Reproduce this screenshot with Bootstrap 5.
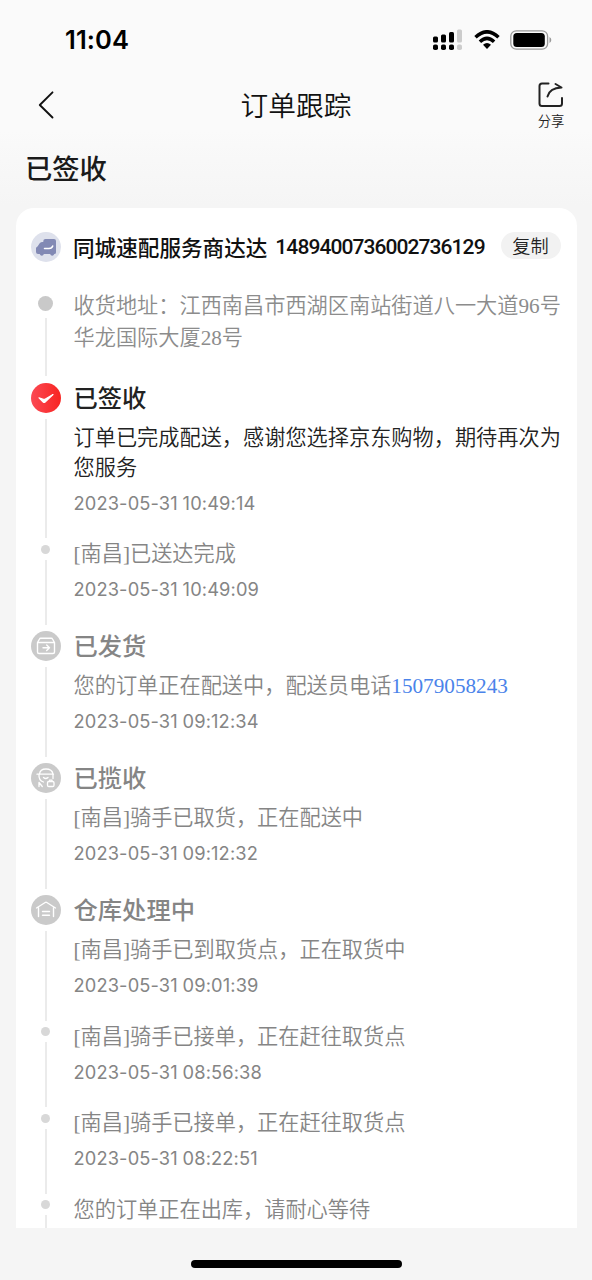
<!DOCTYPE html>
<html lang="zh-CN">
<head>
<meta charset="utf-8">
<meta name="viewport" content="width=device-width, initial-scale=1">
<title>订单跟踪</title>
<link href="https://cdn.jsdelivr.net/npm/bootstrap@5.3.0/dist/css/bootstrap.min.css" rel="stylesheet">
<style>
  body { font-family: "Noto Sans CJK SC", sans-serif; color: #1a1a1a; background: #f5f5f5; }
  .screen { height: 1280px; background: linear-gradient(#fafafa 0, #fafafa 130px, #f5f5f5 205px); }
  .status-bar { height: 80px; padding: 0 40px 0 65px; }
  .clock { font: 600 25.5px/30px Inter, sans-serif; color: #000; letter-spacing: .1px; }
  .title-bar { height: 50px; padding: 0 27px 0 37px; }
  .title-bar h1 { font-size: 27.7px; font-weight: 350; line-height: 40px; color: #111; padding-bottom: 2px; }
  .share { width: 28px; font-size: 13.3px; font-weight: 350; line-height: 16px; color: #222; }
  .state { height: 78px; padding: 17px 0 0 25px; font-size: 27.3px; line-height: 40px; font-weight: 500; }
  .sheet { width: 561px; height: 1020px; margin-left: 15.5px; padding: 0 15px; border-radius: 18px 18px 0 0; }
  .courier { height: 81px; padding-bottom: 4px; }
  .courier-name { font-size: 21.6px; font-weight: 500; line-height: 30px; color: #111; }
  .courier-no { font: 500 21px/30px Roboto, sans-serif; letter-spacing: -.92px; color: #111; padding-top: 1px; }
  .copy-btn { width: 60px; height: 27px; font-size: 18.2px; font-weight: 350; line-height: 25px; background: #f2f2f2; color: #222; margin: 0 1px 2px 0; }
  .rail { width: 30px; flex: none; }
  .rail::after { content: ""; flex: 1; width: 2px; margin: 6px 0 1px; background: #ebebeb; }
  .event { font-family: "Liberation Serif", "Noto Sans CJK SC", sans-serif; font-weight: 350; font-size: 21.2px; line-height: 30px; color: #858585; gap: 13px; }
  .event-body { padding-bottom: 24.5px; white-space: nowrap; }
  .address { line-height: 32px; color: #8c8c8c; }
  .address .event-body { padding: 1px 0 23px; }
  .address .rail { padding-top: 7px; }
  .address .dot { width: 15px; height: 15px; background: #c9c9c9; margin-bottom: 1px; }
  .dot { width: 9px; height: 9px; border-radius: 50%; background: #d8d8d8; }
  .step .rail { padding-top: 5.5px; }
  .stage { padding-top: 3.5px; }
  .stage .rail { padding-top: 2px; }
  .stage h2 { font: 500 24.3px/34px "Noto Sans CJK SC", sans-serif; margin: -1px 0 9px; }
  .stamp { font: 400 18.3px/24px Inter, sans-serif; color: #858585; margin-top: 8px; letter-spacing: .12px; word-spacing: -.5px; }
  .current { color: #222; }
  .phone { color: #4a83ea; }
  .home-area { height: 52px; padding-top: 32px; }
  .home-line { width: 211px; height: 8px; background: #000; }
  svg { display: block; flex: none; }
</style>
</head>
<body>
<main class="screen overflow-hidden">
  <div class="status-bar d-flex align-items-center justify-content-between">
    <span class="clock">11:04</span>
    <div class="d-flex align-items-center">
      <svg width="30" height="22" viewBox="0 0 30 22" aria-hidden="true">
        <g fill="#000"><rect x="1" y="7.500" width="5" height="6" rx="1.500"/><rect x="9" y="5.500" width="5" height="8" rx="1.500"/><rect x="17" y="3" width="5" height="10.500" rx="1.500"/><rect x="1" y="15.500" width="5" height="5.500" rx="1.800"/><rect x="9" y="15.500" width="5" height="5.500" rx="1.800"/><rect x="17" y="15.500" width="5" height="5.500" rx="1.800"/></g>
        <g fill="#ccc"><rect x="25" y="0.500" width="5" height="13" rx="1.500"/><rect x="25" y="15.500" width="5" height="5.500" rx="1.800"/></g>
      </svg>
      <svg width="26" height="20" viewBox="0 0 26 20" style="margin-left:12px" aria-hidden="true">
        <g fill="none" stroke="#000" stroke-width="3.500"><path d="M1.500 7.200Q13-3.600 24.500 7.200"/><path d="M5.900 11.700Q13 5 20.100 11.700"/></g>
        <path d="M9 14.800Q13 11.300 17 14.800L13 19Z"/>
      </svg>
      <svg width="42" height="20" viewBox="0 0 42 20" style="margin-left:10.500px" aria-hidden="true">
        <rect x=".8" y=".8" width="36.800" height="18.400" rx="5.500" fill="none" stroke="#999" stroke-width="1.300"/>
        <rect x="3.300" y="3" width="31.500" height="14" rx="3.500"/><path d="M39.500 7v6q1.800-1 1.800-3t-1.800-3" fill="#999"/>
      </svg>
    </div>
  </div>

  <header class="title-bar d-flex align-items-center justify-content-between">
    <svg width="18" height="30" viewBox="0 0 18 30" fill="none" stroke="#111" stroke-width="1.900" stroke-linecap="round" stroke-linejoin="round" role="img" aria-label="返回"><path d="M15.500 2.300 2.800 15l12.700 12.500"/></svg>
    <h1 class="mb-0">订单跟踪</h1>
    <div class="share d-flex flex-column align-items-center text-nowrap">
      <svg width="26" height="26" viewBox="0 0 26 26" fill="none" stroke="#222" stroke-width="2" stroke-linecap="round" stroke-linejoin="round" aria-hidden="true"><path d="M10.500 1.500H4Q1.500 1.500 1.500 4v17.500Q1.500 24 4 24h17.500q2.500 0 2.500-2.500V16"/><path d="M9.500 14.500Q11.500 6 23.500 5.500L17.500 2"/></svg>
      <span style="margin-top:5px">分享</span>
    </div>
  </header>

  <div class="state">已签收</div>

  <section class="sheet bg-white overflow-hidden">
    <div class="courier d-flex align-items-center text-nowrap">
      <svg width="30" height="30" viewBox="0 0 30 30" aria-hidden="true"><circle cx="15" cy="15" r="15" fill="#dee1ec"/><path fill="#8289b4" d="M14.500 7H23q2 0 2 2v11.500q0 1.500-1.700 1.500-.6 1.800-2.100 1.800T19.100 22h-6.200q-.6 1.800-2.100 1.800T8.700 22H7q-2 0-2-2v-3.500q0-1.700 1.500-2l2-3Q9.300 10 11 10h1.300V9q0-2 2.200-2"/><path d="M13.500 16.500h4.500q3 0 3.700-2.500" fill="none" stroke="#fff" stroke-width="1.500" stroke-linecap="round"/></svg>
      <span class="courier-name" style="margin-left:12.500px">同城速配服务商达达</span>
      <span class="courier-no" style="margin-left:8px">1489400736002736129</span>
      <button type="button" class="copy-btn btn rounded-pill border-0 p-0 ms-auto">复制</button>
    </div>

    <div class="event address d-flex">
      <div class="rail d-flex flex-column align-items-center"><span class="dot"></span></div>
      <div class="event-body">收货地址：江西南昌市西湖区南站街道八一大道96号<br>华龙国际大厦28号</div>
    </div>

    <div class="event stage current d-flex">
      <div class="rail d-flex flex-column align-items-center">
        <svg width="30" height="30" viewBox="0 0 30 30"><defs><linearGradient id="red"><stop stop-color="#fb4a54"/><stop offset="1" stop-color="#f82421"/></linearGradient></defs><circle cx="15" cy="15" r="15" fill="url(#red)"/><path d="M8 14.800l4.200 4.200q.9.800 1.900 0L22 11.500l-8 4.700q-.8.500-1.700 0Z" fill="#fff" stroke="#fff" stroke-width="1.200" stroke-linejoin="round"/></svg>
      </div>
      <div class="event-body"><h2>已签收</h2>订单已完成配送，感谢您选择京东购物，期待再次为<br>您服务<div class="stamp">2023-05-31 10:49:14</div></div>
    </div>

    <div class="event step d-flex">
      <div class="rail d-flex flex-column align-items-center"><span class="dot"></span></div>
      <div class="event-body">[南昌]已送达完成<div class="stamp">2023-05-31 10:49:09</div></div>
    </div>

    <div class="event stage d-flex">
      <div class="rail d-flex flex-column align-items-center">
        <svg width="30" height="30" viewBox="0 0 30 30"><circle cx="15" cy="15" r="15" fill="#cacaca"/><g fill="none" stroke="#fff" stroke-width="1.400" stroke-linecap="round" stroke-linejoin="round"><path d="M6.500 11.500h17V21q0 1.500-1.500 1.500H8Q6.500 22.500 6.500 21Zm0 0L8.500 8q.3-.7 1.200-.7h10.600q.9 0 1.200.7l2 3.500M12 16.800h6.500m-2.800-2.700 2.800 2.700-2.800 2.700"/></g></svg>
      </div>
      <div class="event-body"><h2>已发货</h2>您的订单正在配送中，配送员电话<span class="phone">15079058243</span><div class="stamp">2023-05-31 09:12:34</div></div>
    </div>

    <div class="event stage d-flex">
      <div class="rail d-flex flex-column align-items-center">
        <svg width="30" height="30" viewBox="0 0 30 30"><circle cx="15" cy="15" r="15" fill="#cacaca"/><g fill="none" stroke="#fff" stroke-width="1.300" stroke-linecap="round" stroke-linejoin="round"><path d="M6 11.200h16.500M8.500 11Q9 6 15 6t7 5v4.500M8 11.500q-.5 6 4.500 7.500M12.500 14.500q2.200 2 4.500 0M8 23.500V19.500l3.300 4"/><rect x="16.500" y="18.500" width="6.500" height="5" rx="1.300"/><path d="M18.500 18.300v-1.200h2.500v1.200"/></g></svg>
      </div>
      <div class="event-body"><h2>已揽收</h2>[南昌]骑手已取货，正在配送中<div class="stamp">2023-05-31 09:12:32</div></div>
    </div>

    <div class="event stage d-flex">
      <div class="rail d-flex flex-column align-items-center">
        <svg width="30" height="30" viewBox="0 0 30 30"><circle cx="15" cy="15" r="15" fill="#cacaca"/><g fill="none" stroke="#fff" stroke-width="1.400" stroke-linecap="round" stroke-linejoin="round"><path d="M7.500 21.500v-9M5.500 13 14.200 7.500q.8-.5 1.600 0L24.500 13M22.500 12.500v9M11.500 16.500h7M11.500 20.300h7"/></g></svg>
      </div>
      <div class="event-body"><h2>仓库处理中</h2>[南昌]骑手已到取货点，正在取货中<div class="stamp">2023-05-31 09:01:39</div></div>
    </div>

    <div class="event step d-flex">
      <div class="rail d-flex flex-column align-items-center"><span class="dot"></span></div>
      <div class="event-body">[南昌]骑手已接单，正在赶往取货点<div class="stamp">2023-05-31 08:56:38</div></div>
    </div>

    <div class="event step d-flex">
      <div class="rail d-flex flex-column align-items-center"><span class="dot"></span></div>
      <div class="event-body">[南昌]骑手已接单，正在赶往取货点<div class="stamp">2023-05-31 08:22:51</div></div>
    </div>

    <div class="event step d-flex">
      <div class="rail d-flex flex-column align-items-center"><span class="dot"></span></div>
      <div class="event-body">您的订单正在出库，请耐心等待</div>
    </div>
  </section>

  <div class="home-area d-flex justify-content-center"><div class="home-line rounded-pill"></div></div>
</main>
<script src="https://cdn.jsdelivr.net/npm/bootstrap@5.3.0/dist/js/bootstrap.bundle.min.js"></script>
</body>
</html>
